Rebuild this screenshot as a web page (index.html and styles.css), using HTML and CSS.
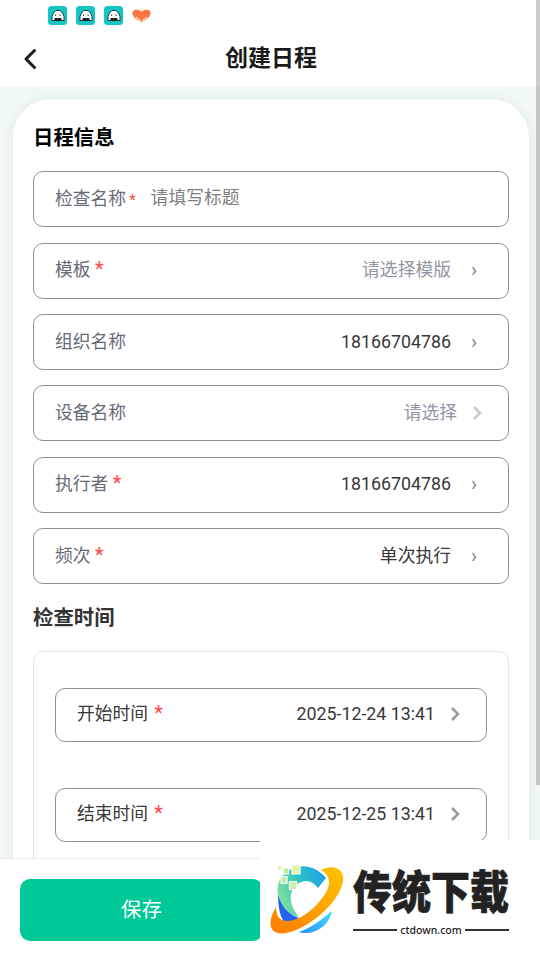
FILE: index.html
```html
<!DOCTYPE html>
<html lang="zh-CN">
<head>
    <meta charset="UTF-8">
    <meta name="viewport" content="width=device-width, initial-scale=1.0">
    <title>创建日程</title>
    <link rel="stylesheet" href="styles.css">
</head>
<body>

<svg class="defs" width="0" height="0">
    <symbol id="robot" viewBox="0 0 19 19">
        <rect width="19" height="19" rx="3.5" fill="#16c4c4"/>
        <path d="M4 14.500v-4l1.500-3.500L8 4.500h4l2.500 2.500L16 10.500v4z" fill="#fff" stroke="#153b40" stroke-width="1"/>
        <path d="M6.500 12h7v3h-7z" fill="#222"/>
        <path d="M7 8.500h1.200v1.200H7zM11.500 8.500h1.200v1.200h-1.200z" fill="#222"/>
    </symbol>
    <symbol id="arrow" viewBox="0 0 10 16">
        <path d="M2 2l6 6-6 6" fill="none" stroke="currentColor" stroke-width="2.5"/>
    </symbol>
</svg>

<header>
    <div class="status">
        <svg class="app"><use href="#robot"/></svg>
        <svg class="app"><use href="#robot"/></svg>
        <svg class="app"><use href="#robot"/></svg>
        <svg class="app heart" viewBox="0 0 19 19">
            <circle cx="9.500" cy="9.500" r="7.500" fill="#fff0df"/>
            <path d="M9.500 16L3 12C-1 8 0 4.500 3 4c3-.5 5 .5 6.500 2 1.500-1.500 3.500-2.500 6.500-2 3 .5 4 4 0 8z" fill="#fb7545"/>
            <path d="M4 11l4 3 .5 3M15 11l-4 3-.5 3" fill="none" stroke="#fff0e4" stroke-width="1"/>
        </svg>
    </div>
    <div class="navbar">
        <svg class="back" viewBox="0 0 14 22"><path d="M11.500 2.500L3 11l8.500 8.500" fill="none" stroke="#1b1b1b" stroke-width="3" stroke-linecap="round" stroke-linejoin="round"/></svg>
        <h1>创建日程</h1>
    </div>
</header>

<main>
    <section class="card">
        <h2>日程信息</h2>
        <div class="fields">
            <div class="field">
                <span class="label">检查名称<i class="small">*</i></span>
                <span class="placeholder">请填写标题</span>
            </div>
            <div class="field required">
                <span class="label">模板 <i>*</i></span>
                <span class="value muted">请选择模版</span>
                <span class="more">›</span>
            </div>
            <div class="field">
                <span class="label">组织名称</span>
                <span class="value">18166704786</span>
                <span class="more">›</span>
            </div>
            <div class="field device">
                <span class="label">设备名称</span>
                <span class="value muted">请选择</span>
                <svg class="arrow light"><use href="#arrow"/></svg>
            </div>
            <div class="field required">
                <span class="label">执行者 <i>*</i></span>
                <span class="value">18166704786</span>
                <span class="more">›</span>
            </div>
            <div class="field">
                <span class="label">频次 <i>*</i></span>
                <span class="value">单次执行</span>
                <span class="more">›</span>
            </div>
        </div>
        <h2 class="time-title">检查时间</h2>
        <div class="times">
            <div class="field">
                <span class="label">开始时间<i>*</i></span>
                <span class="value">2025-12-24 13:41</span>
                <svg class="arrow"><use href="#arrow"/></svg>
            </div>
            <div class="field">
                <span class="label">结束时间<i>*</i></span>
                <span class="value">2025-12-25 13:41</span>
                <svg class="arrow"><use href="#arrow"/></svg>
            </div>
        </div>
    </section>
</main>

<footer>
    <button class="save">保存</button>
</footer>

<div class="scrollbar"></div>

<div class="watermark">
    <svg class="logo" viewBox="260 830 100 130">
        <defs>
            <linearGradient id="ring" x1="0" y1="1" x2="1" y2="0">
                <stop offset="0" stop-color="#ff7a00"/>
                <stop offset="1" stop-color="#ffc400"/>
            </linearGradient>
            <linearGradient id="top" x1="0" y1="0.6" x2="1" y2="0.2">
                <stop offset="0" stop-color="#82e39a"/>
                <stop offset=".5" stop-color="#30c4c4"/>
                <stop offset="1" stop-color="#1aa0ea"/>
            </linearGradient>
            <linearGradient id="bottom" x1="0" y1="1" x2="1" y2="0">
                <stop offset="0" stop-color="#2c91f5"/>
                <stop offset="1" stop-color="#43dfff"/>
            </linearGradient>
        </defs>
        <path d="M278 894c0 13 2 22 6 28 6 1 10-1 15-4-10-3-17-12-21-24z" fill="#2463ec"/>
        <path d="M326 878c-9-11-23-15-35-9-12 6-16 18-12 29 4 10 10 17 20 19-11-13-11-27 0-34 7-4 14-2 19 5z" fill="url(#top)"/>
        <path d="M332 911c-2 12-13 21-24 22-4 0-7 0-9-1 12-4 22-12 33-21z" fill="url(#bottom)"/>
        <path d="M321 870c10-5 20-3 22 6 2 13-13 33-31 45-14 10-29 15-37 11-7-4-5-15 1-25 0 9 4 14 11 14 10 0 23-8 32-19 12-13 14-25 2-32z" fill="url(#ring)"/>
        <g stroke="#fff" stroke-width="1.200">
            <path d="M292 865h8v9h-8z" fill="#e5f3a0"/>
            <path d="M283.500 868h5v6h-5z" fill="#bdea91"/>
            <path d="M281 876.500h6v7h-6z" fill="#bdf0a1"/>
            <path d="M289.500 881.500h7v8h-7z" fill="#c4f2a0"/>
        </g>
        <path d="M278 866h3.500v4H278z" fill="#e6f5b0"/>
    </svg>
    <div class="brand">
        <div class="brand-name">传统下载</div>
        <div class="brand-url">ctdown.com</div>
    </div>
</div>

</body>
</html>
```
FILE: styles.css
```css
* {
    box-sizing: border-box;
}
body {
    margin: 0;
    height: 960px;
    overflow: hidden;
    position: relative;
    display: flex;
    flex-direction: column;
    font-family: Roboto, "Noto Sans CJK SC", sans-serif;
    font-size: 17.8px;
    color: #383838;
    background: #f0f9f5;
}
.defs {
    position: absolute;
}
header {
    height: 87px;
    flex: none;
    background: #fff;
}
.status {
    display: flex;
    gap: 9px;
    padding: 6px 0 0 48px;
    height: 32px;
}
.app {
    width: 19px;
    height: 19px;
}
.navbar {
    display: grid;
    grid-template-columns: 42px 1fr 42px;
    align-items: center;
    height: 54px;
    padding-left: 2px;
}
.back {
    width: 14px;
    height: 22px;
    margin-left: 21px;
}
h1 {
    margin: 0;
    font-size: 23px;
    font-weight: 700;
    line-height: 34px;
    text-align: center;
    color: #1b1b1b;
}
main {
    flex: 1;
    min-height: 0;
    overflow: hidden;
    padding: 12px 11px 0 13px;
}
.card {
    height: 900px;
    padding: 20px;
    border-radius: 38px 38px 0 0;
    background: #fff;
    box-shadow: 0 0 14px rgba(0, 0, 0, 0.07);
}
h2 {
    margin: 0;
    height: 52.2px;
    font-size: 20.4px;
    font-weight: 700;
    line-height: 38px;
    color: #000;
}
.fields {
    display: grid;
    gap: 15.4px;
}
.field {
    display: flex;
    align-items: center;
    height: 56px;
    padding: 0 30px 0 21px;
    border: 1px solid #8a909c;
    border-radius: 10px;
    line-height: 26px;
}
.required {
    padding-bottom: 2px;
}
.label {
    color: #666b76;
}
.label i {
    font-style: normal;
    font-size: 20px;
    line-height: 0;
    color: #f44;
}
.label .small {
    margin-left: 3px;
    font-size: 15px;
}
.placeholder {
    margin: -2px 0 0 15px;
    color: #808080;
}
.value {
    margin-left: auto;
}
.muted {
    color: #9096a2;
}
.more {
    width: 7px;
    margin-left: 20px;
    font-size: 20px;
    color: #8a909c;
    -webkit-text-stroke: 0.2px #8a909c;
}
.arrow {
    width: 10px;
    height: 16px;
    margin: 0 1px 0 15px;
    color: #999;
}
.light {
    color: #c8c9cc;
}
.device {
    padding-right: 25px;
}
.time-title {
    height: 67px;
    padding-top: 15px;
    color: #333;
}
.times {
    display: grid;
    align-content: start;
    gap: 46px;
    height: 300px;
    padding: 36px 21px;
    border: 1px solid #e4e5e8;
    border-radius: 10px;
}
.times .field {
    height: 54px;
    padding: 0 25px 2px 21px;
}
.times .label {
    color: #383838;
}
.times i {
    margin-left: 6px;
}
footer {
    height: 102px;
    flex: none;
    padding: 20px;
    border-top: 1px solid #ebebeb;
    background: #fff;
}
.save {
    width: 243px;
    height: 62px;
    padding: 0;
    border: 0;
    border-radius: 10px;
    font: 20.4px/62px Roboto, "Noto Sans CJK SC", sans-serif;
    color: #fff;
    background: #00c998;
}
.scrollbar {
    position: absolute;
    top: 0;
    right: 0;
    width: 4px;
    height: 785px;
    background: rgba(0, 0, 0, 0.2);
}
/* sits over the page bottom */
.watermark {
    position: absolute;
    right: 0;
    bottom: 0;
    display: flex;
    width: 280px;
    height: 120px;
    background: #fff;
}
.logo {
    width: 100px;
    height: 130px;
    margin-top: -10px;
    flex: none;
}
.brand {
    width: 156px;
    margin: 27px 0 0 -7px;
    color: #222;
}
.brand-name {
    height: 44px;
    font: 900 39px/44px "Noto Sans CJK SC", sans-serif;
    -webkit-text-stroke: 0.6px #222;
    transform: scaleY(1.17);
    white-space: nowrap;
}
.brand-url {
    display: flex;
    align-items: center;
    gap: 3px;
    margin-top: 11px;
    font: 500 10.5px/16px "Noto Sans", sans-serif;
}
.brand-url::before,
.brand-url::after {
    content: "";
    flex: 1;
    height: 2px;
    background: #333;
}
```
